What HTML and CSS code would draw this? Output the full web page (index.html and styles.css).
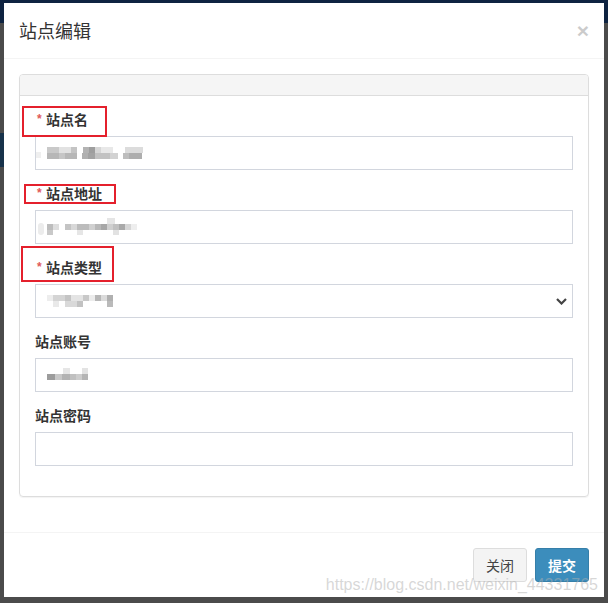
FILE: index.html
```html
<!DOCTYPE html>
<html lang="zh-CN">
<head>
<meta charset="utf-8">
<title>站点编辑</title>
<link rel="stylesheet" href="styles.css">
</head>
<body>
<div class="modal">
  <div class="modal-header">
    <h4 class="modal-title">站点编辑</h4>
    <span class="close">×</span>
  </div>
  <div class="modal-body">
    <div class="panel">
      <div class="panel-heading"></div>
      <div class="panel-body">
        <div class="form-group">
          <span class="mark mark-1"></span>
          <label class="label"><span class="req">*</span>站点名</label>
          <div class="form-control">
            <svg class="mosaic" width="200" height="32" viewBox="0 0 200 32">
              <rect x="0" y="15" width="5" height="6" fill="#efefef"/>
              <rect x="11" y="10" width="12" height="6" fill="#c9c9c9"/>
              <rect x="23" y="10" width="12" height="6" fill="#e2e2e2"/>
              <rect x="35" y="10" width="6" height="6" fill="#c4c4c4"/>
              <rect x="47" y="10" width="6" height="6" fill="#b3b3b3"/>
              <rect x="53" y="10" width="6" height="6" fill="#9e9e9e"/>
              <rect x="59" y="10" width="6" height="6" fill="#d6d6d6"/>
              <rect x="65" y="10" width="12" height="6" fill="#e8e8e8"/>
              <rect x="89" y="10" width="18" height="6" fill="#dcdcdc"/>
              <rect x="11" y="16" width="30" height="6" fill="#b7b7b7"/>
              <rect x="23" y="16" width="6" height="6" fill="#c6c6c6"/>
              <rect x="46" y="16" width="6" height="6" fill="#b0b0b0"/>
              <rect x="52" y="16" width="7" height="6" fill="#a3a3a3"/>
              <rect x="59" y="16" width="15" height="6" fill="#c2c2c2"/>
              <rect x="74" y="16" width="8" height="6" fill="#d2d2d2"/>
              <rect x="87" y="16" width="6" height="6" fill="#bdbdbd"/>
              <rect x="93" y="16" width="13" height="6" fill="#aeaeae"/>
            </svg>
          </div>
        </div>
        <div class="form-group">
          <span class="mark mark-2"></span>
          <label class="label"><span class="req">*</span>站点地址</label>
          <div class="form-control">
            <svg class="mosaic" width="200" height="32" viewBox="0 0 200 32">
              <rect x="2" y="12" width="6" height="12" rx="3" fill="#ececec"/>
              <rect x="11" y="13" width="6" height="6" fill="#bdbdbd"/>
              <rect x="17" y="13" width="6" height="6" fill="#dedede"/>
              <rect x="11" y="19" width="6" height="5" fill="#c9c9c9"/>
              <rect x="29" y="13" width="6" height="6" fill="#c4c4c4"/>
              <rect x="35" y="13" width="6" height="6" fill="#d8d8d8"/>
              <rect x="41" y="13" width="12" height="6" fill="#bcbcbc"/>
              <rect x="53" y="13" width="6" height="6" fill="#d0d0d0"/>
              <rect x="59" y="13" width="6" height="6" fill="#b8b8b8"/>
              <rect x="65" y="13" width="6" height="6" fill="#a7a7a7"/>
              <rect x="71" y="13" width="6" height="6" fill="#cfcfcf"/>
              <rect x="71" y="7" width="8" height="6" fill="#e5e5e5"/>
              <rect x="77" y="13" width="6" height="6" fill="#c0c0c0"/>
              <rect x="83" y="13" width="6" height="6" fill="#a9a9a9"/>
              <rect x="89" y="13" width="6" height="6" fill="#d6d6d6"/>
              <rect x="95" y="13" width="6" height="6" fill="#eeeeee"/>
              <rect x="41" y="19" width="6" height="5" fill="#e6e6e6"/>
              <rect x="77" y="19" width="6" height="5" fill="#e2e2e2"/>
            </svg>
          </div>
        </div>
        <div class="form-group">
          <span class="mark mark-3"></span>
          <label class="label"><span class="req">*</span>站点类型</label>
          <div class="form-control select">
            <svg class="mosaic" width="200" height="32" viewBox="0 0 200 32">
              <rect x="11" y="10" width="6" height="6" fill="#ededed"/>
              <rect x="17" y="10" width="12" height="6" fill="#d4d4d4"/>
              <rect x="29" y="10" width="6" height="6" fill="#c4c4c4"/>
              <rect x="35" y="10" width="12" height="6" fill="#e4e4e4"/>
              <rect x="47" y="10" width="6" height="6" fill="#c8c8c8"/>
              <rect x="53" y="10" width="6" height="6" fill="#ececec"/>
              <rect x="59" y="10" width="6" height="6" fill="#b7b7b7"/>
              <rect x="65" y="10" width="6" height="6" fill="#dbdbdb"/>
              <rect x="71" y="10" width="6" height="6" fill="#b0b0b0"/>
              <rect x="17" y="16" width="6" height="6" fill="#e9e9e9"/>
              <rect x="29" y="16" width="12" height="6" fill="#d9d9d9"/>
              <rect x="41" y="16" width="6" height="6" fill="#c2c2c2"/>
              <rect x="71" y="16" width="6" height="6" fill="#bababa"/>
            </svg>
            <svg class="chevron" width="11" height="7" viewBox="0 0 11 7">
              <polyline points="1,1 5.5,5.5 10,1" fill="none" stroke="#444" stroke-width="2.2"/>
            </svg>
          </div>
        </div>
        <div class="form-group">
          <label class="label">站点账号</label>
          <div class="form-control">
            <svg class="mosaic" width="200" height="32" viewBox="0 0 200 32">
              <rect x="27" y="9" width="7" height="6" fill="#e6e6e6"/>
              <rect x="46" y="9" width="6" height="6" fill="#e3e3e3"/>
              <rect x="11" y="15" width="8" height="6" fill="#9c9c9c"/>
              <rect x="19" y="15" width="7" height="6" fill="#c8c8c8"/>
              <rect x="26" y="15" width="8" height="6" fill="#b3b3b3"/>
              <rect x="34" y="15" width="6" height="6" fill="#c0c0c0"/>
              <rect x="40" y="15" width="6" height="6" fill="#cdcdcd"/>
              <rect x="46" y="15" width="6" height="6" fill="#b5b5b5"/>
            </svg>
          </div>
        </div>
        <div class="form-group">
          <label class="label">站点密码</label>
          <div class="form-control"></div>
        </div>
      </div>
    </div>
  </div>
  <div class="modal-footer">
    <button class="btn btn-default" type="button">关闭</button>
    <button class="btn btn-primary" type="button">提交</button>
    <span class="watermark">https://blog.csdn.net/weixin_44331765</span>
  </div>
</div>
</body>
</html>
```

FILE: styles.css
```css
html, body {
  margin: 0;
  padding: 0;
  width: 608px;
  height: 603px;
  overflow: hidden;
}

body {
  background:
    linear-gradient(to bottom, #0e2341 0, #0e2341 23px, transparent 23px),
    linear-gradient(to bottom, transparent 133px, #17324a 133px, #17324a 167px, transparent 167px) left top / 4px 100% no-repeat,
    #4b4b4b;
  font-family: "Noto Sans CJK SC", "Liberation Sans", sans-serif;
  color: #333;
}

.modal {
  margin: 3px 4px 0 4px;
  width: 600px;
  height: 594px;
  background: #fff;
  display: flex;
  flex-direction: column;
  position: relative;
}

.modal-header {
  display: flex;
  align-items: flex-start;
  justify-content: space-between;
  padding: 15px;
  border-bottom: 1px solid #f4f4f4;
}

.modal-title {
  margin: 0;
  font-size: 18px;
  line-height: 25px;
  font-weight: normal;
  color: #333;
}

.close {
  font-family: "Liberation Sans", sans-serif;
  font-size: 21px;
  font-weight: bold;
  line-height: 1;
  color: #000;
  opacity: 0.2;
  margin-top: 2px;
}

.modal-body {
  padding: 15px 15px 15px 15px;
  flex: 1;
}

.panel {
  border: 1px solid #ddd;
  border-radius: 4px;
  box-shadow: 0 1px 1px rgba(0, 0, 0, 0.05);
}

.panel-heading {
  height: 20px;
  background: #f5f5f5;
  border-bottom: 1px solid #ddd;
  border-radius: 3px 3px 0 0;
}

.panel-body {
  padding: 15px;
}

.form-group {
  position: relative;
  margin-bottom: 15px;
}

.label {
  display: block;
  font-size: 14px;
  line-height: 17px;
  font-weight: bold;
  color: #333;
  margin-bottom: 8px;
}

.req {
  display: inline-block;
  width: 11px;
  padding-left: 2px;
  box-sizing: border-box;
  color: #e05a5a;
  font-family: "Liberation Sans", sans-serif;
  font-weight: bold;
  font-size: 12px;
  vertical-align: top;
  line-height: 16px;
}

.form-control {
  height: 34px;
  box-sizing: border-box;
  border: 1px solid #d2d6de;
  background: #fff;
  display: flex;
  align-items: flex-start;
  justify-content: space-between;
}

.mosaic {
  display: block;
}

.chevron {
  display: block;
  margin: 13px 5px 0 0;
}

.mark {
  position: absolute;
  border: 2px solid #e4202c;
  box-sizing: border-box;
}

.mark-1 { left: -13px; top: -5px; width: 85px; height: 31px; }
.mark-2 { left: -11px; top: -1px; width: 92px; height: 20px; }
.mark-3 { left: -14px; top: -13px; width: 93px; height: 36px; }

.modal-footer {
  display: flex;
  justify-content: flex-end;
  gap: 8px;
  padding: 15px;
  border-top: 1px solid #f4f4f4;
  position: relative;
}

.btn {
  height: 34px;
  padding: 0 12px;
  font-family: "Noto Sans CJK SC", sans-serif;
  font-size: 14px;
  line-height: 32px;
  border-radius: 3px;
  border: 1px solid transparent;
}

.btn-default {
  background: #f4f4f4;
  border-color: #ddd;
  color: #444;
}

.btn-primary {
  background: #3c8dbc;
  border-color: #367fa9;
  color: #fff;
  font-weight: bold;
}

.watermark {
  position: absolute;
  right: 6px;
  bottom: 3px;
  font-family: "Liberation Sans", sans-serif;
  font-size: 16px;
  line-height: 18px;
  color: rgba(175, 175, 175, 0.5);
  white-space: nowrap;
}
```
